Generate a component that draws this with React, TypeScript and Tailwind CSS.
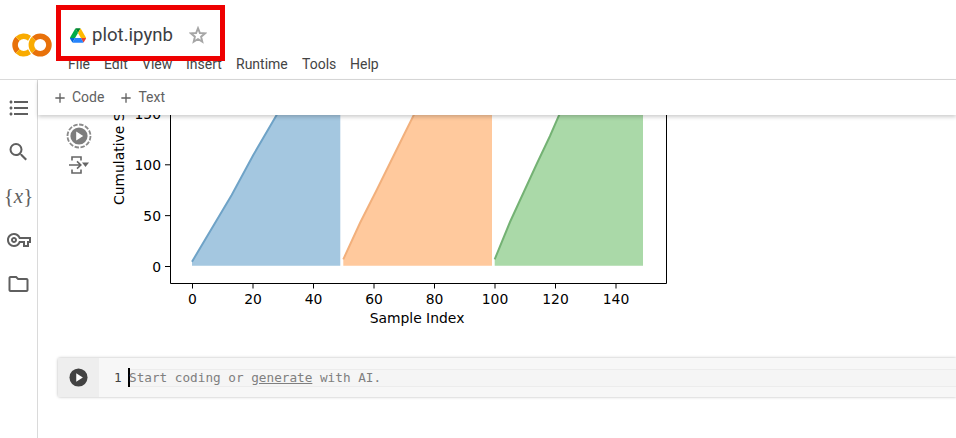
import React from 'react';
import { MdFormatListBulleted, MdSearch, MdOutlineVpnKey, MdOutlineFolder, MdAdd } from 'react-icons/md';

const menuItems = [
  { label: 'File', className: 'w-[36px]' },
  { label: 'Edit', className: 'w-[38px]' },
  { label: 'View', className: 'w-[44px]' },
  { label: 'Insert', className: 'w-[50px]' },
  { label: 'Runtime', className: 'w-[66px]' },
  { label: 'Tools', className: 'w-[48px]' },
  { label: 'Help', className: 'w-[40px]' },
];

const xTicks = [0, 20, 40, 60, 80, 100, 120, 140];
const yTicks = [0, 50, 100, 150];

function ColabLogo() {
  return (
    <svg viewBox="0 0 24 24" className="w-[40px] h-[40px] shrink-0">
      <path d="M4.54 9.46 2.19 7.1a6.93 6.93 0 0 0 0 9.79l2.36-2.36a3.59 3.59 0 0 1-.01-5.07z" fill="#E8710A" />
      <path d="M2.19 7.1l2.35 2.36a3.59 3.59 0 0 1 5.08 0l1.71-2.93-.1-.08A6.93 6.93 0 0 0 2.19 7.1z" fill="#F9AB00" />
      <path d="M11.34 17.46 9.62 14.54a3.59 3.59 0 0 1-5.08 0L2.19 16.9a6.93 6.93 0 0 0 9 .65z" fill="#F9AB00" />
      <path d="M12 7a7 7 0 0 0 0 9.9l2.36-2.36a3.59 3.59 0 0 1 0-5.08z" fill="#F9AB00" />
      <path d="M21.81 7.1a6.93 6.93 0 0 0-9.8 0l2.36 2.36a3.59 3.59 0 0 1 5.08 0 3.59 3.59 0 0 1 0 5.08 3.59 3.59 0 0 1-5.08 0L12 16.9a6.93 6.93 0 0 0 9.8 0 6.93 6.93 0 0 0 0-9.8z" fill="#E8710A" />
    </svg>
  );
}

function DriveIcon() {
  return (
    <svg viewBox="0 0 87.3 78" className="w-[16px] h-[15px] shrink-0 -mt-[2px]">
      <path d="m6.6 66.85 3.85 6.65c.8 1.4 1.95 2.5 3.3 3.3l13.75-23.8h-27.5c0 1.55.4 3.1 1.2 4.5z" fill="#0066da" />
      <path d="m43.65 25-13.75-23.8c-1.35.8-2.5 1.9-3.3 3.3l-25.4 44a9.06 9.06 0 0 0 -1.2 4.5h27.5z" fill="#00ac47" />
      <path d="m73.55 76.8c1.35-.8 2.5-1.9 3.3-3.3l1.6-2.75 7.65-13.25c.8-1.4 1.2-2.95 1.2-4.5h-27.502l5.852 11.5z" fill="#ea4335" />
      <path d="m43.65 25 13.75-23.8c-1.35-.8-2.9-1.2-4.5-1.2h-18.5c-1.6 0-3.15.45-4.5 1.2z" fill="#00832d" />
      <path d="m59.8 53h-32.3l-13.75 23.8c1.35.8 2.9 1.2 4.5 1.2h50.8c1.6 0 3.15-.45 4.5-1.2z" fill="#2684fc" />
      <path d="m73.4 26.5-12.7-22c-.8-1.4-1.95-2.5-3.3-3.3l-13.75 23.8 16.15 28h27.45c0-1.55-.4-3.1-1.2-4.5z" fill="#ffba00" />
    </svg>
  );
}

function StarIcon() {
  return (
    <svg viewBox="0 0 18 18" className="w-[18px] h-[18px] shrink-0 -mt-[2px]">
      <path
        d="M9 2.2 10.9 7l5.1.4-3.9 3.3 1.2 5L9 13l-4.3 2.7 1.2-5L2 7.4 7.1 7z"
        fill="none"
        stroke="#a6a6a6"
        strokeWidth="1.9"
        strokeLinejoin="miter"
      />
    </svg>
  );
}

function RunDashedIcon() {
  return (
    <svg viewBox="0 0 26 26" className="w-[26px] h-[26px]">
      <circle cx="13" cy="13" r="11.5" fill="none" stroke="#8a8a8a" strokeWidth="1.8" strokeDasharray="4.4 1.6" />
      <circle cx="13" cy="13" r="8.6" fill="#7d7d7d" />
      <path d="M10.2 8.6v8.8l7-4.4z" fill="#fff" />
    </svg>
  );
}

function OutputIcon() {
  return (
    <svg viewBox="0 0 20 18" className="w-[20px] h-[18px]" fill="none" stroke="#666666" strokeWidth="1.6">
      <path d="M3 4.5V1h9v3.5M3 13.5V17h9v-3.5" />
      <path d="M0 9h11.5M8 5.4 11.8 9 8 12.6" />
      <path d="M13 6.5h7L16.5 11z" fill="#666666" stroke="none" />
    </svg>
  );
}

function PlotChart() {
  return (
    <svg viewBox="100 115 580 215" className="w-[580px] h-[215px] shrink-0 block">
      <path d="M192 261.7 231.7 195 253.3 155 277.8 113 340.3 113 340.3 265.7 192 265.7z" fill="#a4c7e0" />
      <path d="M192 261.7 231.7 195 253.3 155 277.8 113" fill="none" stroke="#6fa3c7" strokeWidth="2" />
      <path d="M343.3 259.3 360 223 376.7 190 403 136.7 414.8 113 492 113 492 265.7 343.3 265.7z" fill="#ffc99d" />
      <path d="M343.3 259.3 360 223 376.7 190 403 136.7 414.8 113" fill="none" stroke="#f2b07c" strokeWidth="2" />
      <path d="M494.7 259.3 510 222 536.7 164 550 136 560 113 643 113 643 265.7 494.7 265.7z" fill="#aad9a8" />
      <path d="M494.7 259.3 510 222 536.7 164 550 136 560 113" fill="none" stroke="#74b274" strokeWidth="2" />

      <path d="M170.5 100V283.5H666.5V100" fill="none" stroke="#000" strokeWidth="1" />

      <g fontFamily="'DejaVu Sans', sans-serif" fontSize="13.9" fill="#000">
        {xTicks.map((t) => {
          const x = 192.5 + t * 3.025;
          return (
            <g key={t}>
              <line x1={x} x2={x} y1="283.5" y2="288.5" stroke="#000" />
              <text x={x} y="304" textAnchor="middle">{t}</text>
            </g>
          );
        })}
        {yTicks.map((t) => {
          const y = 266.5 - t * 1.017;
          return (
            <g key={t}>
              <line x1="165" x2="170.5" y1={y} y2={y} stroke="#000" />
              <text x="161" y={y + 5} textAnchor="end">{t}</text>
            </g>
          );
        })}
        <text x="417" y="323" textAnchor="middle">Sample Index</text>
        <text transform="translate(124 205) rotate(-90)">Cumulative Sum</text>
      </g>
    </svg>
  );
}

function CodeCell() {
  return (
    <div className="ml-[20px] mt-[28px] h-[39px] flex bg-[#f7f7f7] shadow-[0_0_3px_rgba(0,0,0,0.3)] rounded-l-[2px]">
      <div className="w-[41px] bg-[#eeeeee] flex items-center justify-center">
        <svg viewBox="0 0 20 20" className="w-[19px] h-[19px]">
          <circle cx="10" cy="10" r="9.5" fill="#424242" />
          <path d="M7.6 5.6v8.8l7-4.4z" fill="#fff" />
        </svg>
      </div>
      <div className="flex-1 flex items-center pl-[15px] font-['DejaVu_Sans_Mono',monospace] text-[12.7px] leading-[18px]">
        <span className="w-[14px] text-[#424242]">1</span>
        <div className="flex-1 flex items-center border-y border-[#ececec] bg-[#f5f5f5] h-[18px]">
          <span className="w-[2px] h-[19px] bg-black shrink-0" />
          <span className="text-[#7f7f7f] -ml-[1px] whitespace-pre">
            Start coding or <span className="underline">generate</span> with AI.
          </span>
        </div>
      </div>
    </div>
  );
}

export default function App() {
  return (
    <div className="relative w-[956px] h-[438px] overflow-hidden bg-white font-['Roboto',sans-serif]">
      {/* top bar */}
      <header className="h-[80px] border-b border-[#dadada] flex items-start pl-[12px]">
        <div className="mt-[25px]">
          <ColabLogo />
        </div>
        <div className="flex flex-col pl-[16px]">
          <div className="flex items-center h-[44px] mt-[14px] pl-[2px]">
            <DriveIcon />
            <span className="ml-[6px] w-[80px] text-[18.6px] text-[#3c4043] font-['Roboto',sans-serif]">plot.ipynb</span>
            <span className="ml-[17px]"><StarIcon /></span>
          </div>
          <nav className="flex text-[14px] leading-[16px] text-[#444444] -mt-[2px]">
            {menuItems.map((item) => (
              <span key={item.label} className={item.className}>{item.label}</span>
            ))}
          </nav>
        </div>
      </header>

      <div className="flex h-[358px]">
        {/* left rail */}
        <aside className="w-[38px] shrink-0 border-r border-[#dadada] flex flex-col items-center pt-[16px] gap-[20px] text-[#5f5f5f]">
          <MdFormatListBulleted className="w-[24px] h-[24px]" />
          <MdSearch className="w-[25px] h-[24px]" />
          <span className="h-[24px] leading-[24px] text-[21px] font-['Liberation_Serif',serif] whitespace-pre">
            {'{'}<span className="italic">x</span>{'}'}
          </span>
          <MdOutlineVpnKey className="w-[26px] h-[24px]" />
          <MdOutlineFolder className="w-[25px] h-[24px]" />
        </aside>

        <main className="flex-1 min-w-0 flex flex-col">
          <div className="relative z-10 h-[35px] shrink-0 bg-white shadow-[0_2px_4px_rgba(0,0,0,0.2)] flex items-center pl-[14px] gap-[14px] text-[14px] text-[#616161]">
            <span className="flex items-center gap-[4px]"><MdAdd className="w-[16px] h-[16px]" />Code</span>
            <span className="flex items-center gap-[4px]"><MdAdd className="w-[16px] h-[16px]" />Text</span>
          </div>

          {/* output of the cell above */}
          <div className="flex">
            <div className="w-[62px] shrink-0 flex flex-col items-center pl-[20px] pt-[8px] gap-[7px]">
              <RunDashedIcon />
              <OutputIcon />
            </div>
            <PlotChart />
          </div>

          <CodeCell />
        </main>
      </div>

      {/* red annotation box */}
      <div className="absolute left-[56px] top-[5px] w-[169px] h-[56px] border-[5px] border-[#ee0000]" />
    </div>
  );
}
